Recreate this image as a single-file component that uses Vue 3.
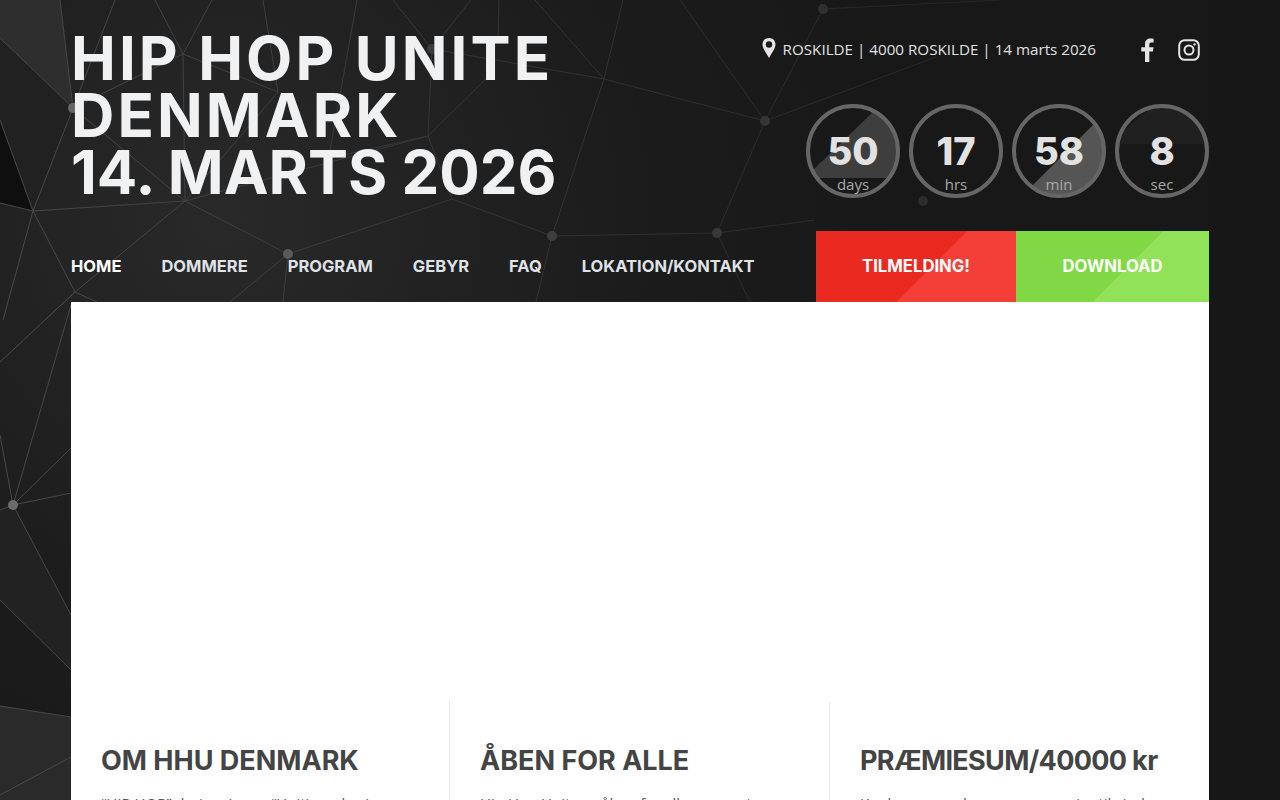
<template>
    <div class="page">
        <!-- network backdrop -->
        <svg class="backdrop" width="1280" height="800" viewBox="0 0 1280 800">
            <defs>
                <linearGradient id="lineFade" gradientUnits="userSpaceOnUse" x1="0" y1="0" x2="1000" y2="0">
                    <stop offset="0" stop-color="#484848" />
                    <stop offset="0.5" stop-color="#333" />
                    <stop offset="1" stop-color="#242424" />
                </linearGradient>
                <radialGradient id="glow" gradientUnits="userSpaceOnUse" cx="220" cy="220" r="680">
                    <stop offset="0" stop-color="#292929" />
                    <stop offset="0.6" stop-color="#1c1c1c" />
                    <stop offset="1" stop-color="#181818" />
                </radialGradient>
                <clipPath id="dialClip"><circle cx="47" cy="47" r="45" /></clipPath>
            </defs>
            <rect width="1280" height="800" fill="url(#glow)" />
            <polygon points="0,0 60,0 73,108 0,38" fill="#2e2e2e" />
            <polygon points="0,120 33,211 0,203" fill="#0f0f0f" />
            <polygon points="0,38 73,108 33,211 0,120" fill="#212121" />
            <polygon points="0,706 71,717 71,800 0,800" fill="#2a2a2a" />
            <polygon points="0,510 13,505 71,615 71,670 0,600" fill="#222" />
            <rect x="1209" width="71" height="800" fill="#171717" />
            <path :d="linePath" fill="none" stroke="url(#lineFade)" stroke-width="1" />
            <circle
                v-for="dot in dots"
                :key="dot.x"
                :cx="dot.x"
                :cy="dot.y"
                :r="dot.r"
                :fill="dot.fill"
            />
        </svg>

        <div class="wrap">
            <header class="top">
                <h1 class="title">
                    <span class="line-wide">HIP HOP UNITE</span>
                    <span class="line-wide">DENMARK</span>
                    <span>14. MARTS 2026</span>
                </h1>
                <div class="top-right">
                    <div class="info">
                        <svg class="pin" width="14" height="20" viewBox="0 0 14 20">
                            <path
                                fill="#e4e4e4"
                                fill-rule="evenodd"
                                d="M7 0C3.1 0 .5 2.8.5 6.5.5 10.500 5 16 7 20c2-4 6.500-9.500 6.500-13.500C13.500 2.800 10.900 0 7 0zm0 3.300a3.200 3.200 0 1 1 0 6.400 3.200 3.200 0 0 1 0-6.400z"
                            />
                        </svg>
                        <span class="place">ROSKILDE | 4000 ROSKILDE | 14 marts 2026</span>
                        <div class="social">
                            <svg width="14" height="24" viewBox="0 0 14 24">
                                <path
                                    fill="#e4e4e4"
                                    d="M9.300 24V13.400h3.600l.6-4.200H9.300V6.600c0-1.200.4-2.100 2.100-2.100h2.200V.8C13.200.7 11.900.6 10.400.6 7.200.6 5 2.500 5 6.100v3.100H1.300v4.200H5V24z"
                                />
                            </svg>
                            <svg width="22" height="22" viewBox="0 0 22 22" fill="none" stroke="#e4e4e4">
                                <rect x="1.200" y="1.200" width="19.600" height="19.600" rx="5.500" stroke-width="2" />
                                <circle cx="11" cy="11" r="4.500" stroke-width="2" />
                                <circle cx="16.600" cy="5.400" r="1.200" fill="#e4e4e4" stroke="none" />
                            </svg>
                        </div>
                    </div>
                    <div class="countdown">
                        <div v-for="unit in units" :key="unit.label" class="unit">
                            <svg class="dial" width="94" height="94" viewBox="0 0 94 94">
                                <polygon v-if="unit.wedge" :points="unit.wedge" :fill="unit.fill" clip-path="url(#dialClip)" />
                                <circle cx="47" cy="47" r="45" fill="none" stroke="#666" stroke-width="4" />
                            </svg>
                            <span class="num">{{ unit.value }}</span>
                            <span class="lbl">{{ unit.label }}</span>
                        </div>
                    </div>
                </div>
            </header>

            <div class="bar">
                <nav class="menu">
                    <a
                        v-for="(link, i) in links"
                        :key="link"
                        href="#"
                        :class="{ active: i === 0 }"
                    >{{ link }}</a>
                </nav>
                <div class="actions">
                    <a href="#" class="btn btn-red">TILMELDING!</a>
                    <a href="#" class="btn btn-green">DOWNLOAD</a>
                </div>
            </div>

            <main class="card">
                <div class="media"></div>
                <div class="cols">
                    <section v-for="col in cols" :key="col.title" class="col">
                        <h2>{{ col.title }}</h2>
                        <p>{{ col.text }}</p>
                    </section>
                </div>
            </main>
        </div>
    </div>
</template>

<script setup>
const links = ["HOME", "DOMMERE", "PROGRAM", "GEBYR", "FAQ", "LOKATION/KONTAKT"];

const units = [
    { value: 50, label: "days", wedge: "7,66 67,8 67,0 94,0 94,74 0,74", fill: "#3e3e3e" },
    { value: 17, label: "hrs" },
    { value: 58, label: "min", wedge: "8,94 94,8 94,94", fill: "#555" },
    { value: 8, label: "sec", wedge: "0,40 0,34 40,0 94,0 94,40", fill: "#202020" },
];

const cols = [
    {
        title: "OM HHU DENMARK",
        text: "“HIP HOP” drejer sig om “Uniting, sharing",
    },
    {
        title: "ÅBEN FOR ALLE",
        text: "Hip Hop Unite er åben for alle – uanset om",
    },
    {
        title: "PRÆMIESUM/40000 kr",
        text: "Konkurrencen har pengepræmier til vinderne i",
    },
];

// baggrundens netværk
const segments = [
    [73, 108, 60, 0], [73, 108, 0, 38], [73, 108, 33, 211], [73, 108, 115, 0],
    [73, 108, 183, 54], [73, 108, 185, 201], [183, 54, 155, 0], [183, 54, 212, 0],
    [183, 54, 278, 92], [183, 54, 185, 201], [278, 92, 263, 0], [278, 92, 185, 201],
    [185, 201, 75, 292], [185, 201, 288, 254], [185, 201, 33, 211], [185, 201, 428, 136],
    [288, 254, 230, 302], [288, 254, 283, 302], [288, 254, 452, 199], [33, 211, 0, 203],
    [33, 211, 75, 292], [33, 211, 3, 320], [0, 120, 33, 211], [75, 292, 45, 320],
    [75, 292, 97, 302], [75, 292, 0, 362], [13, 505, 71, 305], [13, 505, 71, 448],
    [13, 505, 71, 493], [13, 505, 71, 615], [13, 505, 0, 510], [13, 505, 0, 435],
    [0, 600, 71, 670], [0, 706, 71, 717], [0, 795, 71, 757], [393, 0, 432, 49],
    [471, 0, 432, 49], [357, 0, 340, 95], [340, 95, 330, 150], [499, 0, 498, 38],
    [535, 0, 604, 79], [623, 0, 604, 79], [432, 49, 604, 79], [604, 79, 765, 121],
    [604, 79, 552, 236], [428, 136, 432, 49], [428, 136, 452, 199], [428, 136, 490, 75],
    [428, 136, 330, 158], [680, 0, 765, 121], [765, 121, 717, 233], [765, 121, 823, 9],
    [765, 121, 936, 57], [717, 233, 552, 236], [717, 233, 750, 302], [717, 233, 815, 220],
    [552, 236, 536, 302], [552, 236, 452, 199], [823, 9, 1000, 0],
];

const linePath = segments
    .map(([x1, y1, x2, y2]) => `M${x1} ${y1}L${x2} ${y2}`)
    .join("");

const dots = [
    { x: 73, y: 108, r: 5, fill: "#666" },
    { x: 288, y: 254, r: 5, fill: "#5a5a5a" },
    { x: 13, y: 505, r: 5, fill: "#6c6c6c" },
    { x: 432, y: 49, r: 5, fill: "#3c3c3c" },
    { x: 552, y: 236, r: 5, fill: "#3e3e3e" },
    { x: 717, y: 233, r: 5, fill: "#383838" },
    { x: 765, y: 121, r: 5, fill: "#353535" },
    { x: 823, y: 9, r: 5, fill: "#303030" },
    { x: 923, y: 201, r: 5, fill: "#2c2c2c" },
];
</script>

<style>
html,
body {
    margin: 0;
    background: #181818;
    overflow: hidden;
}
</style>

<style scoped>
.page {
    position: relative;
    height: 800px;
    overflow: hidden;
    font-family: "Open Sans", sans-serif;
}

.backdrop {
    position: absolute;
    top: 0;
    left: 0;
}

.wrap {
    position: relative;
    margin: 0 71px;
}

.top {
    display: flex;
    justify-content: space-between;
    height: 231px;
}

.title {
    display: flex;
    flex-direction: column;
    margin: 0;
    padding-top: 30px;
    font-family: Inter, sans-serif;
    font-size: 60px;
    font-weight: 700;
    line-height: 57px;
    color: #f0f1f3;
}

.line-wide {
    letter-spacing: 3.1px;
}

.top-right {
    display: flex;
    flex-direction: column;
    align-items: flex-end;
}

.info {
    display: flex;
    align-items: center;
    height: 24px;
    margin-top: 37px;
    margin-bottom: 1px;
    padding-right: 9px;
    color: #e0e0e0;
    font-size: 15.2px;
}

.place {
    margin-left: 7px;
}

.pin {
    flex: none;
    margin-top: -3px;
}

.social {
    display: flex;
    align-items: center;
    gap: 24px;
    margin-top: 2px;
    margin-left: 44px;
}

.countdown {
    display: flex;
    gap: 9px;
    margin-top: 42px;
}

.unit {
    position: relative;
    display: flex;
    flex-direction: column;
    align-items: center;
    width: 94px;
    height: 94px;
    color: #e2e2e2;
}

.dial {
    position: absolute;
    top: 0;
    left: 0;
}

.num {
    position: relative;
    margin-top: 28px;
    font-family: Inter, sans-serif;
    font-size: 38px;
    font-weight: 800;
    line-height: 38px;
}

.lbl {
    position: relative;
    margin-top: 5px;
    font-size: 15px;
    line-height: 18px;
    color: #a8a8a8;
}

.bar {
    display: flex;
    justify-content: space-between;
    height: 71px;
}

.menu {
    display: flex;
    align-items: center;
    gap: 40px;
    padding-bottom: 2px;
}

.menu a {
    font-family: Inter, sans-serif;
    font-size: 16.5px;
    font-weight: 700;
    color: #dfe2e6;
    text-decoration: none;
}

.menu a.active {
    color: #fff;
}

.actions {
    display: flex;
}

.btn {
    display: flex;
    align-items: center;
    justify-content: center;
    box-sizing: border-box;
    height: 71px;
    padding-bottom: 2px;
    font-family: Inter, sans-serif;
    font-size: 16.7px;
    font-weight: 700;
    color: #fff;
    text-decoration: none;
}

.btn-red {
    width: 200px;
    background: linear-gradient(135deg, #ea2a20 107px, #f33f37 107px);
}

.btn-green {
    width: 193px;
    background: linear-gradient(135deg, #80d944 104px, #91e258 104px);
}

.card {
    background: #fff;
}

.media {
    height: 399px;
}

.cols {
    display: grid;
    grid-template-columns: 378px 380px 380px;
}

.col {
    height: 200px;
    box-sizing: border-box;
    padding: 43px 30px 0;
    border-left: 1px solid #eaeaea;
}

.col:first-child {
    border-left: none;
}

.col h2 {
    margin: 0;
    font-family: Inter, sans-serif;
    font-size: 27px;
    font-weight: 700;
    line-height: 34px;
    color: #444;
}

.col:last-child h2 {
    letter-spacing: -0.65px;
}

.col p {
    margin: 13px 0 0;
    font-size: 15px;
    line-height: 24px;
    color: #555;
}
</style>
